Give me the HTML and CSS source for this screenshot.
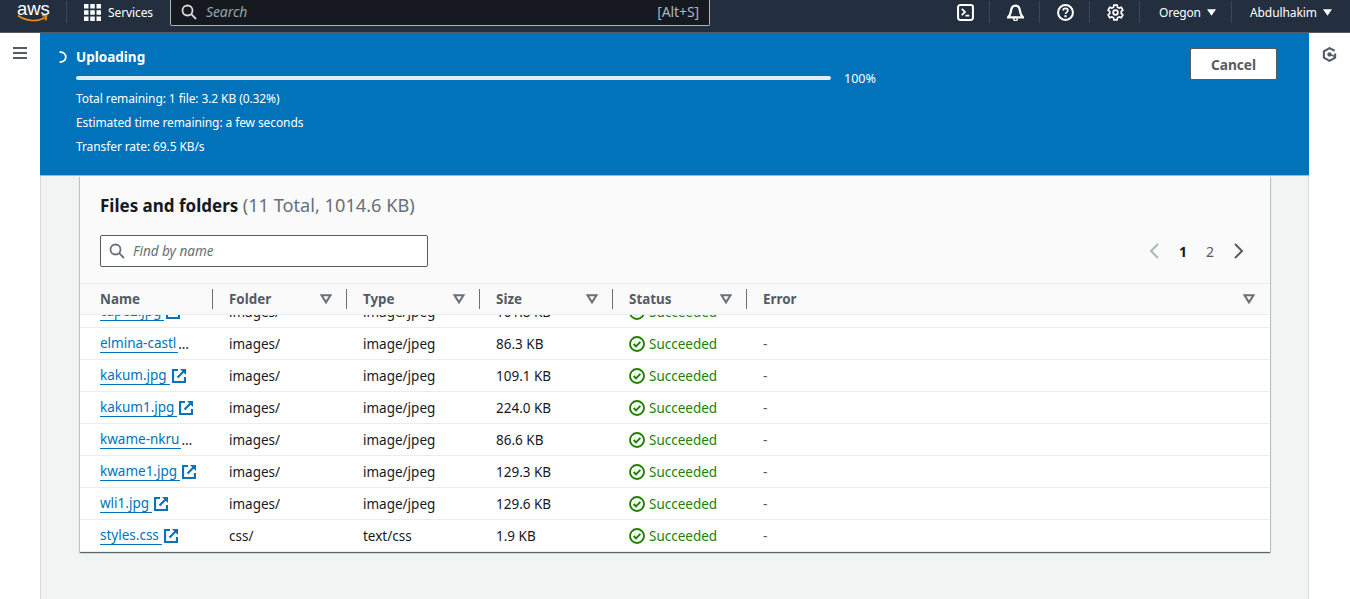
FILE: index.html
```html
<!DOCTYPE html>
<html lang="en">
<head>
    <meta charset="UTF-8">
    <meta name="viewport" content="width=device-width, initial-scale=1.0">
    <title>Upload | S3</title>
    <link rel="stylesheet" href="styles.css">
</head>
<body>
    <svg class="sprites" width="0" height="0">
        <symbol id="ext" viewBox="0 0 14 14">
            <path d="M6 1H1v12h12V8" fill="none" stroke="#0972b8" stroke-width="2.200"/>
            <path d="M5.500 8.500 11.500 2.500" fill="none" stroke="#0972b8" stroke-width="2.200"/>
            <path d="M8 0h6v6z" fill="#0972b8"/>
        </symbol>
        <symbol id="ok" viewBox="0 0 16 16">
            <circle cx="8" cy="8" r="7" fill="none" stroke="#1d8102" stroke-width="1.900"/>
            <path d="M4.600 8 7 10.400l4.400-4.600" fill="none" stroke="#1d8102" stroke-width="1.900"/>
        </symbol>
        <symbol id="filter" viewBox="0 0 12 10">
            <path d="M1.500 1.200h9L6 8.400z" fill="none" stroke="#687078" stroke-width="2"/>
        </symbol>
        <symbol id="caret" viewBox="0 0 10 7">
            <path d="M0 0h10L5 7z" fill="#fff"/>
        </symbol>
    </svg>

    <header class="topnav">
        <a class="logo">
            <span class="logoText">aws</span>
            <svg class="smile" width="32" height="9" viewBox="0 0 32 9"><path d="M1 1.500c8 6 20 6.500 27 2M25 1.500l4.500.5-1 4.500" fill="none" stroke="#ec9215" stroke-width="1.600"/></svg>
        </a>
        <span class="navSep"></span>
        <a class="services">
            <svg width="17" height="17" viewBox="0 0 17 17" fill="#fff"><path d="M0 0h4.500v4.500H0zM6.250 0h4.500v4.500h-4.500zM12.500 0H17v4.500h-4.500zM0 6.250h4.500v4.500H0zM6.250 6.250h4.500v4.500h-4.500zM12.500 6.250H17v4.500h-4.500zM0 12.500h4.500V17H0zM6.250 12.500h4.500V17h-4.500zM12.500 12.500H17V17h-4.500z"/></svg>
            <span>Services</span>
        </a>
        <div class="navSearch">
            <svg width="16" height="16" viewBox="0 0 16 16"><circle cx="6.500" cy="6.500" r="5" fill="none" stroke="#d5dbdb" stroke-width="1.800"/><path d="m10.200 10.200 4.800 4.800" stroke="#d5dbdb" stroke-width="1.800"/></svg>
            <span class="navSearchText">Search</span>
            <span class="shortcut">[Alt+S]</span>
        </div>
        <div class="navRight">
            <a class="navIcon">
                <svg width="17" height="17" viewBox="0 0 16 16"><rect x="1" y="1" width="14" height="14" rx="2" fill="none" stroke="#fff" stroke-width="1.900"/><path d="m4.500 4.500 3 3-3 3M8 11h3.500" fill="none" stroke="#fff" stroke-width="1.700"/></svg>
            </a>
            <a class="navIcon">
                <svg width="17" height="17" viewBox="0 0 16 16"><path d="M1 12.500h14c-2-2-2.500-3.500-2.800-6C11.900 3.500 10.500 1.500 8 1.500S4.100 3.500 3.800 6.500C3.500 9 3 10.500 1 12.500z" fill="none" stroke="#fff" stroke-width="2.100"/><circle cx="8" cy="14" r="1.700" fill="none" stroke="#fff" stroke-width="1.300"/></svg>
            </a>
            <a class="navIcon">
                <svg width="17" height="17" viewBox="0 0 16 16"><circle cx="8" cy="8" r="7" fill="none" stroke="#fff" stroke-width="1.900"/><path d="M5.800 6.200C5.800 5 6.800 4.200 8 4.200s2.200.8 2.200 2c0 1.700-2.200 1.700-2.200 3.300" fill="none" stroke="#fff" stroke-width="1.600"/><path d="M7 10.500h2v2H7z" fill="#fff"/></svg>
            </a>
            <a class="navIcon">
                <svg width="17" height="17" viewBox="0 0 16 16"><path d="m6.500 1h3l.4 2 1.500.9 2-.7 1.500 2.600-1.500 1.400v1.600l1.500 1.400-1.500 2.600-2-.7-1.500.9-.4 2h-3l-.4-2-1.500-.9-2 .7L1.100 10.200l1.500-1.400V7.200L1.100 5.800l1.500-2.600 2 .7 1.500-.9z" fill="none" stroke="#fff" stroke-width="1.600"/><circle cx="8" cy="8" r="2.200" fill="none" stroke="#fff" stroke-width="1.700"/></svg>
            </a>
            <a class="navMenu regionMenu">Oregon <svg width="9" height="7"><use href="#caret"/></svg></a>
            <a class="navMenu userMenu">Abdulhakim <svg width="9" height="7"><use href="#caret"/></svg></a>
        </div>
    </header>

    <div class="layout">
        <aside class="rail">
            <svg class="railIcon" width="14" height="12" viewBox="0 0 14 12" fill="#545b64"><path d="M0 0h14v2H0zM0 5h14v2H0zM0 10h14v2H0z"/></svg>
        </aside>

        <main class="content">
            <section class="banner">
                <svg class="spinner" width="12" height="12" viewBox="0 0 12 12"><path d="M3.500 1.300a4.900 4.900 0 1 1 0 9.400" fill="none" stroke="#fff" stroke-width="1.700"/></svg>
                <div class="bannerBody">
                    <h2 class="bannerTitle">Uploading</h2>
                    <div class="progress">
                        <div class="progressBar"></div>
                        <span class="progressValue">100%</span>
                    </div>
                    <p class="bannerLine">Total remaining: 1 file: 3.2 KB (0.32%)</p>
                    <p class="bannerLine">Estimated time remaining: a few seconds</p>
                    <p class="bannerLine">Transfer rate: 69.5 KB/s</p>
                </div>
                <button class="cancelBtn">Cancel</button>
            </section>

            <section class="card">
                <div class="cardHead">
                    <h2 class="cardTitle">Files and folders <span class="cardCount">(11 Total, 1014.6 KB)</span></h2>
                    <div class="tools">
                        <div class="findBox">
                            <svg width="16" height="16" viewBox="0 0 16 16"><circle cx="6.500" cy="6.500" r="5" fill="none" stroke="#687078" stroke-width="1.800"/><path d="m10.200 10.200 4.800 4.800" stroke="#687078" stroke-width="1.800"/></svg>
                            <span>Find by name</span>
                        </div>
                        <div class="pager">
                            <svg width="12" height="16" viewBox="0 0 12 16"><path d="M10 1 3 8l7 7" fill="none" stroke="#aab7b8" stroke-width="2"/></svg>
                            <span class="pageNum current">1</span>
                            <span class="pageNum">2</span>
                            <svg width="12" height="16" viewBox="0 0 12 16"><path d="m2 1 7 7-7 7" fill="none" stroke="#545b64" stroke-width="2"/></svg>
                        </div>
                    </div>
                </div>

                <div class="row headRow">
                    <div class="th firstCell">Name</div>
                    <div class="th">Folder <svg width="12" height="10"><use href="#filter"/></svg></div>
                    <div class="th">Type <svg width="12" height="10"><use href="#filter"/></svg></div>
                    <div class="th">Size <svg width="12" height="10"><use href="#filter"/></svg></div>
                    <div class="th">Status <svg width="12" height="10"><use href="#filter"/></svg></div>
                    <div class="th lastTh">Error <svg width="12" height="10"><use href="#filter"/></svg></div>
                </div>

                <div class="rowsClip">
                    <div class="rows">
                        <div class="row">
                            <div class="td firstCell"><a class="fileLink">cape2.jpg</a><svg class="extIcon" width="14" height="14"><use href="#ext"/></svg></div>
                            <div class="td">images/</div><div class="td">image/jpeg</div><div class="td">101.8 KB</div>
                            <div class="td okCell"><svg width="16" height="16"><use href="#ok"/></svg>Succeeded</div><div class="td dash">-</div>
                        </div>
                        <div class="row">
                            <div class="td firstCell"><a class="fileLink cutLink">elmina-castl</a><span class="dots">…</span></div>
                            <div class="td">images/</div><div class="td">image/jpeg</div><div class="td">86.3 KB</div>
                            <div class="td okCell"><svg width="16" height="16"><use href="#ok"/></svg>Succeeded</div><div class="td dash">-</div>
                        </div>
                        <div class="row">
                            <div class="td firstCell"><a class="fileLink">kakum.jpg</a><svg class="extIcon" width="14" height="14"><use href="#ext"/></svg></div>
                            <div class="td">images/</div><div class="td">image/jpeg</div><div class="td">109.1 KB</div>
                            <div class="td okCell"><svg width="16" height="16"><use href="#ok"/></svg>Succeeded</div><div class="td dash">-</div>
                        </div>
                        <div class="row">
                            <div class="td firstCell"><a class="fileLink">kakum1.jpg</a><svg class="extIcon" width="14" height="14"><use href="#ext"/></svg></div>
                            <div class="td">images/</div><div class="td">image/jpeg</div><div class="td">224.0 KB</div>
                            <div class="td okCell"><svg width="16" height="16"><use href="#ok"/></svg>Succeeded</div><div class="td dash">-</div>
                        </div>
                        <div class="row">
                            <div class="td firstCell"><a class="fileLink cutLink">kwame-nkru</a><span class="dots">…</span></div>
                            <div class="td">images/</div><div class="td">image/jpeg</div><div class="td">86.6 KB</div>
                            <div class="td okCell"><svg width="16" height="16"><use href="#ok"/></svg>Succeeded</div><div class="td dash">-</div>
                        </div>
                        <div class="row">
                            <div class="td firstCell"><a class="fileLink">kwame1.jpg</a><svg class="extIcon" width="14" height="14"><use href="#ext"/></svg></div>
                            <div class="td">images/</div><div class="td">image/jpeg</div><div class="td">129.3 KB</div>
                            <div class="td okCell"><svg width="16" height="16"><use href="#ok"/></svg>Succeeded</div><div class="td dash">-</div>
                        </div>
                        <div class="row">
                            <div class="td firstCell"><a class="fileLink">wli1.jpg</a><svg class="extIcon" width="14" height="14"><use href="#ext"/></svg></div>
                            <div class="td">images/</div><div class="td">image/jpeg</div><div class="td">129.6 KB</div>
                            <div class="td okCell"><svg width="16" height="16"><use href="#ok"/></svg>Succeeded</div><div class="td dash">-</div>
                        </div>
                        <div class="row">
                            <div class="td firstCell"><a class="fileLink">styles.css</a><svg class="extIcon" width="14" height="14"><use href="#ext"/></svg></div>
                            <div class="td">css/</div><div class="td">text/css</div><div class="td">1.9 KB</div>
                            <div class="td okCell"><svg width="16" height="16"><use href="#ok"/></svg>Succeeded</div><div class="td dash">-</div>
                        </div>
                    </div>
                </div>
            </section>
        </main>

        <aside class="rail rightRail">
            <svg class="railIcon" width="15" height="15" viewBox="0 0 16 16"><path d="M13.500 4 8 1.200 2 4.600v6.800l6 3.400 6-3.400V7" fill="none" stroke="#545b64" stroke-width="2.200"/><circle cx="8" cy="8" r="2.300" fill="#545b64"/><path d="M8 7.500 13 10" stroke="#545b64" stroke-width="1.600"/></svg>
        </aside>
    </div>
</body>
</html>
```

FILE: styles.css
```css
* {
    box-sizing: border-box;
}

body {
    margin: 0;
    height: 599px;
    overflow: hidden;
    background-color: #fff;
    color: #16191f;
    font-family: "Noto Sans", "Open Sans", Arial, sans-serif;
    font-size: 14px;
}

h2, p {
    margin: 0;
}

.sprites {
    position: absolute;
}

/* top bar */
.topnav {
    display: flex;
    align-items: center;
    height: 33px;
    padding-bottom: 8px;
    background-color: #232f3e;
    border-bottom: 1px solid #545b64;
    color: #fff;
    font-size: 12px;
    letter-spacing: -0.1px;
}

.logo {
    position: relative;
    width: 66px;
    height: 24px;
    flex: none;
}

.logoText {
    display: block;
    text-align: center;
    width: 32px;
    margin-left: 17px;
    font-family: "Liberation Sans", Arial, sans-serif;
    font-size: 18.500px;
    line-height: 17px;
}

.smile {
    position: absolute;
    left: 17px;
    top: 14px;
}

.navSep {
    width: 1px;
    height: 22px;
    background-color: #414750;
}

.services {
    display: flex;
    align-items: center;
    gap: 7px;
    width: 103px;
    padding-left: 17px;
    flex: none;
}

.navSearch {
    display: flex;
    align-items: center;
    align-self: flex-start;
    width: 540px;
    height: 26px;
    padding: 0 10px 2px;
    background-color: #16191f;
    border: 1px solid #aab7b8;
    border-top: none;
    border-radius: 0 0 2px 2px;
}

.navSearchText {
    margin-left: 9px;
    font-style: italic;
    font-size: 14px;
    color: #95a5a6;
    flex: 1;
}

.shortcut {
    font-size: 14px;
    color: #aab7b8;
}

.navRight {
    display: flex;
    align-items: center;
    margin-left: auto;
}

.navIcon {
    display: flex;
    align-items: center;
    justify-content: center;
    width: 50px;
    height: 22px;
    padding-left: 2px;
    border-right: 1px solid #414750;
}

.navMenu {
    display: flex;
    align-items: center;
    gap: 6px;
    height: 22px;
    font-size: 12px;
}

.regionMenu {
    width: 92px;
    padding-left: 19px;
    letter-spacing: -0.2px;
    border-right: 1px solid #414750;
}

.userMenu {
    width: 118px;
    padding-left: 18px;
}

/* page */
.layout {
    display: flex;
    height: 566px;
}

.rail {
    width: 40px;
    flex: none;
    padding: 14px 0 0 13px;
    background-color: #fff;
}

.rightRail {
    width: 41px;
    padding-left: 13px;
}

.railIcon {
    display: block;
}

.content {
    flex: 1;
    min-width: 0;
    background-color: #f2f3f3;
    box-shadow: inset 1px 0 #d5dbdb, inset -1px 0 #d5dbdb;
}

/* upload banner */
.banner {
    display: flex;
    height: 143px;
    padding: 15px 32px 0 16px;
    background-color: #0073bb;
    border-bottom: 1px solid #aab7b8;
    color: #fff;
}

.spinner {
    flex: none;
    margin-top: 3px;
}

.bannerBody {
    flex: 1;
    padding-left: 8px;
}

.bannerTitle {
    font-size: 13.500px;
    font-weight: 700;
    line-height: 18px;
}

.progress {
    display: flex;
    align-items: center;
    gap: 13px;
    width: 800px;
    height: 14px;
    margin: 5px 0 2px;
}

.progressBar {
    width: 755px;
    height: 4px;
    border-radius: 2px;
    background-color: #e3eef6;
}

.progressValue {
    font-size: 12.500px;
}

.bannerLine {
    font-size: 12px;
    letter-spacing: -0.1px;
    line-height: 24px;
}

.cancelBtn {
    width: 87px;
    height: 32px;
    background-color: #fff;
    border: 1px solid #545b64;
    border-radius: 2px;
    color: #545b64;
    font-family: inherit;
    font-size: 13.700px;
    font-weight: 700;
}

/* card */
.card {
    width: 1190px;
    margin-left: 40px;
    background-color: #fff;
    box-shadow: 0 1px 1px 0 rgba(0, 28, 36, 0.5), 1px 1px 1px 0 rgba(0, 28, 36, 0.15), -1px 1px 1px 0 rgba(0, 28, 36, 0.15);
}

.cardHead {
    height: 108px;
    padding: 17px 20px 0;
    background-color: #fafafa;
    border-bottom: 1px solid #eaeded;
}

.cardTitle {
    font-size: 17px;
    font-weight: 700;
    line-height: 24px;
}

.cardCount {
    font-size: 18.200px;
    font-weight: 400;
    color: #687078;
}

.tools {
    display: flex;
    align-items: center;
    justify-content: space-between;
    margin-top: 17px;
}

.findBox {
    display: flex;
    align-items: center;
    gap: 8px;
    width: 328px;
    height: 32px;
    padding-left: 8px;
    background-color: #fff;
    border: 1px solid #545b64;
    border-radius: 2px;
    font-size: 13.500px;
    font-style: italic;
    color: #687078;
}

.pager {
    display: flex;
    align-items: center;
    gap: 19px;
    padding-right: 5px;
    color: #545b64;
}

.pageNum.current {
    font-weight: 700;
    color: #16191f;
}

/* table rows */
.row {
    display: grid;
    grid-template-columns: 133px 134px 133px 133px 134px 1fr;
    height: 32px;
    border-bottom: 1px solid #eaeded;
    align-items: center;
}

.headRow {
    height: 31px;
    background-color: #fafafa;
    font-weight: 700;
    color: #545b64;
    font-size: 13.400px;
}

.th {
    display: flex;
    align-items: center;
    justify-content: space-between;
    height: 20px;
    padding: 0 14px 0 16px;
    border-right: 1px solid #687078;
}

.lastTh {
    padding-right: 15px;
    border-right: none;
}

.td {
    display: flex;
    align-items: center;
    padding-left: 16px;
    font-size: 13.500px;
    white-space: nowrap;
    overflow: hidden;
}

.firstCell {
    padding-left: 20px;
}

.rowsClip {
    height: 237px;
    overflow: hidden;
}

.rows {
    margin-top: -19px;
}

.fileLink {
    padding-right: 3px;
    color: #0073bb;
    border-bottom: 1px solid #0073bb;
    line-height: 17px;
}

.cutLink {
    padding-right: 2px;
}

.extIcon {
    margin-left: 2px;
    flex: none;
}

.dots {
    color: #16191f;
}

.okCell {
    color: #1d8102;
    gap: 4px;
}

.dash {
    color: #545b64;
}
```
